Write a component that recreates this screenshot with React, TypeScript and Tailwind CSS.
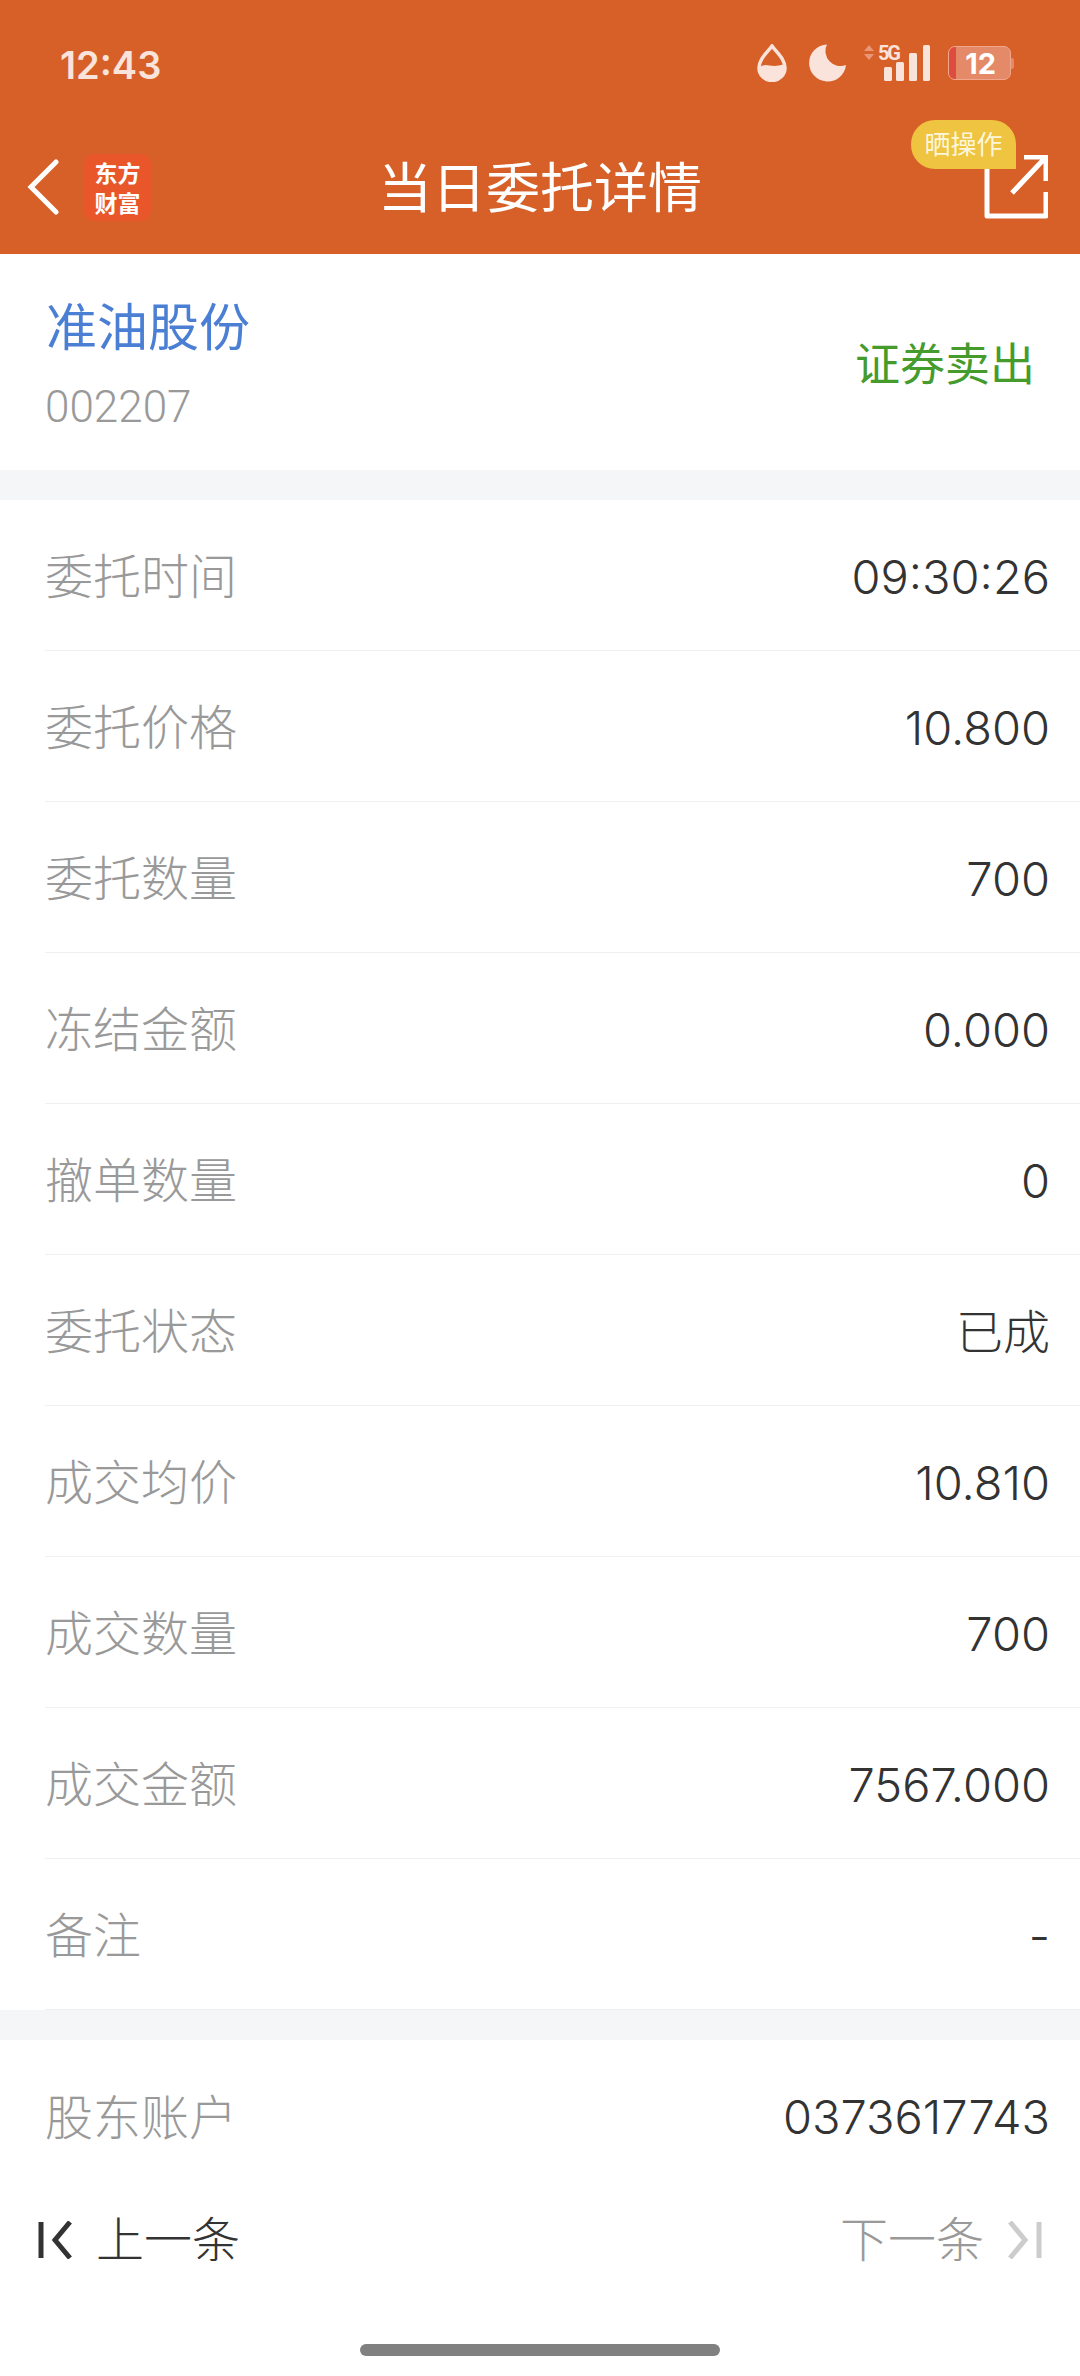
const rows: [string, string][] = [
  ["委托时间", "09:30:26"],
  ["委托价格", "10.800"],
  ["委托数量", "700"],
  ["冻结金额", "0.000"],
  ["撤单数量", "0"],
  ["委托状态", "已成"],
  ["成交均价", "10.810"],
  ["成交数量", "700"],
  ["成交金额", "7567.000"],
  ["备注", "-"],
];

function Row({ label, value }: { label: string; value: string }) {
  return (
    <div className="h-[151px] pl-[45px]">
      <div className="h-full flex items-center justify-between pr-[30px] pt-[4px] border-b border-[#f0f0f0]">
        <span className="text-[48px] text-[#999999] font-light">{label}</span>
        <span className="text-[47px] text-[#333333] font-light">{value}</span>
      </div>
    </div>
  );
}

function StatusBar() {
  return (
    <div className="h-[100px] pt-[30px] pl-[60px] pr-[66px] flex items-start justify-between">
      <span className="text-[38px] leading-[70px] font-semibold text-[#fae3da]">12:43</span>
      <div className="flex items-center pt-[14px]">
        <svg width="30" height="38" viewBox="0 0 30 38" className="mr-[22px]">
          <path d="M15 2 C10 9 2 15 2 24 a13 12.5 0 0 0 26 0 C28 15 20 9 15 2Z" fill="none" stroke="#fae3da" strokeWidth="3.5" />
          <path d="M3 23 C10 18 14 25 27 20 L28 24 a13 12.5 0 0 1 -26 0Z" fill="#fae3da" />
        </svg>
        <svg width="38" height="38" viewBox="0 0 38 38" className="mr-[16px]">
          <path d="M18 0.5 A18.5 18.5 0 1 0 37 21 A15 15 0 0 1 18 0.5Z" fill="#fae3da" />
        </svg>
        <svg width="68" height="42" viewBox="0 -4 68 42" className="mr-[17px] -mt-[4px]">
          <path d="M1 7 L6 1 L11 7Z M1 10 L11 10 L6 16Z" fill="#ea9678" />
          <text x="15" y="16" fontFamily="Roboto" fontWeight="700" fontSize="20" fill="#fae3da" textLength="23">5G</text>
          <rect x="21" y="23" width="8" height="14" rx="1.5" fill="#fae3da" />
          <rect x="33" y="18" width="8" height="19" rx="1.5" fill="#fae3da" />
          <rect x="46" y="9" width="8" height="28" rx="1.5" fill="#fae3da" />
          <rect x="60" y="1" width="7" height="36" rx="1.5" fill="#fae3da" />
        </svg>
        <div className="relative w-[63px] h-[34px] rounded-[7px] bg-[#e58a68] border border-[#f0a78c] overflow-hidden flex items-center justify-end pr-[14px]">
          <div className="absolute left-0 top-0 bottom-0 w-[7px] bg-[#dd4c3e]" />
          <span className="text-[29px] leading-none font-bold text-white">12</span>
        </div>
        <div className="w-[3px] h-[11px] bg-[#e58a68] rounded-r-[2px]" />
      </div>
    </div>
  );
}

function NavBar() {
  return (
    <div className="relative h-[154px] grid grid-cols-[1fr_auto_1fr] items-center pt-[26px]">
      <div className="flex items-center pl-[27px] pb-[6px]">
        <svg width="32" height="56" viewBox="0 0 32 56">
          <path d="M29 3 L4 28 L29 53" fill="none" stroke="white" strokeWidth="5" strokeLinecap="round" strokeLinejoin="miter" />
        </svg>
        <div className="ml-[25px] w-[67px] h-[67px] rounded-[10px] bg-[#e8562a] flex flex-col items-center justify-center text-white font-['Noto_Sans_CJK_SC',sans-serif] font-bold text-[23px] leading-[30px]">
          <span>东方</span>
          <span>财富</span>
        </div>
      </div>
      <span className="text-[54px] leading-none text-white pb-[2px]">当日委托详情</span>
      <div className="flex justify-end pr-[32px] pb-[6px]">
        <svg width="64" height="64" viewBox="0 0 64 64">
          <path d="M30 4 H3 V61 H62 V37" fill="none" stroke="white" strokeWidth="5" strokeLinejoin="round" />
          <path d="M40 2 H62 V26 M62 2 L28 38" fill="none" stroke="white" strokeWidth="5" />
        </svg>
      </div>
      <div className="absolute left-[911px] top-[20px] w-[105px] h-[49px] rounded-[24px] rounded-br-none bg-[#eec441] flex items-center justify-center text-[26px] leading-none text-[#fdf6dc]">
        晒操作
      </div>
    </div>
  );
}

export default function App() {
  return (
    <div className="w-[1080px] h-[2376px] flex flex-col bg-white overflow-hidden font-['Inter','Noto_Sans_CJK_SC',sans-serif]">
      <div className="bg-[#d75f28] h-[254px] shrink-0">
        <StatusBar />
        <NavBar />
      </div>

      <div className="h-[216px] shrink-0 flex items-center justify-between pl-[46px] pr-[45px] pt-[6px]">
        <div className="flex flex-col">
          <span className="text-[51px] leading-[60px] text-[#4a7fd4]">准油股份</span>
          <span className="mt-[24px] -ml-[1px] text-[44px] leading-[50px] font-['Roboto',sans-serif] font-light text-[#999999]">002207</span>
        </div>
        <span className="text-[45px] text-[#459b2c]">证券卖出</span>
      </div>

      <div className="h-[30px] shrink-0 bg-[#f5f6f8]" />

      <div className="shrink-0">
        {rows.map(([label, value]) => (
          <Row key={label} label={label} value={value} />
        ))}
      </div>

      <div className="h-[30px] shrink-0 bg-[#f5f6f8]" />

      <div className="h-[151px] shrink-0 flex items-center justify-between pl-[45px] pr-[30px] pt-[4px]">
        <span className="text-[48px] text-[#999999] font-light">股东账户</span>
        <span className="text-[47px] text-[#333333] font-light">0373617743</span>
      </div>

      <div className="h-[94px] shrink-0 flex items-center justify-between pl-[38px] pr-[38px] pt-[3px]">
        <div className="flex items-center">
          <svg width="36" height="38" viewBox="0 0 36 38">
            <path d="M3 1 V37" stroke="#333333" strokeWidth="5" fill="none" />
            <path d="M32 1 L17 19 L32 37" stroke="#333333" strokeWidth="5" fill="none" />
          </svg>
          <span className="ml-[22px] text-[48px] text-[#333333] font-light">上一条</span>
        </div>
        <div className="flex items-center">
          <span className="mr-[22px] text-[48px] text-[#999999] font-light">下一条</span>
          <svg width="36" height="38" viewBox="0 0 36 38">
            <path d="M4 1 L19 19 L4 37" stroke="#cccccc" strokeWidth="5" fill="none" />
            <path d="M33 1 V37" stroke="#cccccc" strokeWidth="5" fill="none" />
          </svg>
        </div>
      </div>

      <div className="mt-[59px] mx-auto w-[360px] h-[12px] rounded-full bg-[#808080] shrink-0" />
    </div>
  );
}
